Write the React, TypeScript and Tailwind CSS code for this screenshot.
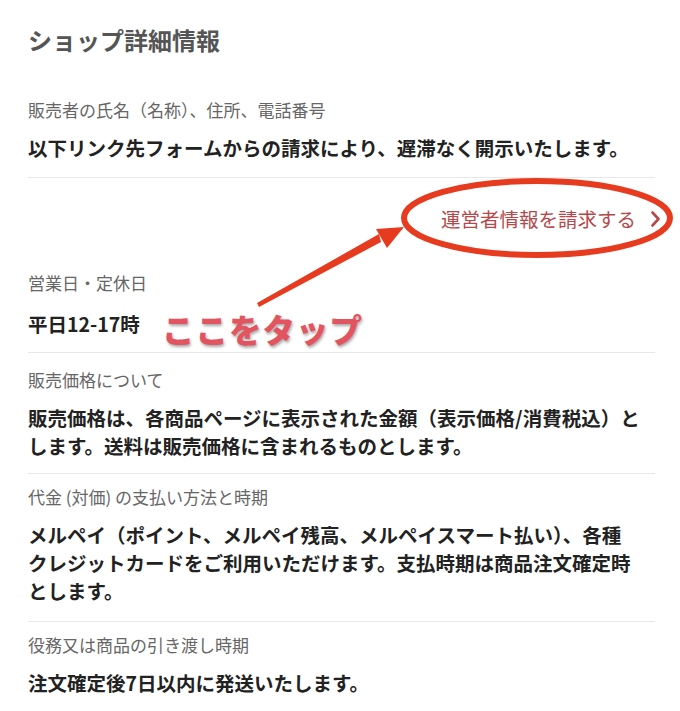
const font = "font-['Noto_Sans_CJK_JP','Noto_Sans',sans-serif]";

function Label({ children }: { children: React.ReactNode }) {
  return <p className="text-[17px] leading-[22px] text-[#666]">{children}</p>;
}

function Body({ children, className = "mt-[13px]" }: { children: React.ReactNode; className?: string }) {
  return (
    <p className={`${className} text-[19.5px] font-bold leading-[28px] text-[#222] whitespace-nowrap`}>
      {children}
    </p>
  );
}

export default function App() {
  return (
    <div className={`relative w-[680px] h-[711px] overflow-hidden bg-white ${font}`}>
      <div className="pl-[28px] pr-[25px]">
        <h1 className="pt-[24px] text-[24px] font-bold leading-[32px] text-[#555]">
          ショップ詳細情報
        </h1>

        <div className="mt-[43px] pb-[15px] border-b border-[#e8e8e8]">
          <Label>販売者の氏名（名称）、住所、電話番号</Label>
          <Body>以下リンク先フォームからの請求により、遅滞なく開示いたします。</Body>
        </div>

        <div className="mt-[27px] -mr-[6px] flex items-center justify-end text-[19.5px] leading-[28px] text-[#b5484a]">
          <span>運営者情報を請求する</span>
          <svg className="ml-[14px]" width="11" height="18" viewBox="0 0 11 18" fill="none">
            <path d="M2.5 2.5l6 6.5-6 6.5" stroke="#b5484a" strokeWidth="2.6" strokeLinecap="round" strokeLinejoin="round" />
          </svg>
        </div>

        <div className="mt-[39px] pb-[14px] border-b border-[#e8e8e8]">
          <Label>営業日・定休日</Label>
          <Body className="mt-[16px]">平日12-17時</Body>
        </div>

        <div className="pt-[16px] pb-[13px] border-b border-[#e8e8e8]">
          <Label>販売価格について</Label>
          <Body>
            販売価格は、各商品ページに表示された金額（表示価格/消費税込）と
            <br />
            します。送料は販売価格に含まれるものとします。
          </Body>
        </div>

        <div className="pt-[12px] pb-[16px] border-b border-[#e8e8e8]">
          <Label>代金 (対価) の支払い方法と時期</Label>
          <Body>
            メルペイ（ポイント、メルペイ残高、メルペイスマート払い）、各種
            <br />
            クレジットカードをご利用いただけます。支払時期は商品注文確定時
            <br />
            とします。
          </Body>
        </div>

        <div className="pt-[12px]">
          <Label>役務又は商品の引き渡し時期</Label>
          <Body>注文確定後7日以内に発送いたします。</Body>
        </div>
      </div>

      {/* annotation overlay */}
      <svg className="absolute left-0 top-0 pointer-events-none" width="680" height="711" viewBox="0 0 680 711">
        <ellipse cx="537" cy="218" rx="133" ry="37" fill="none" stroke="#e63b1f" strokeWidth="6" />
        <polygon points="257,303 259,307 381,242 379,234" fill="#e63b1f" />
        <polygon points="404,227 376,229 387,248" fill="#e63b1f" />
      </svg>
      <span className="absolute left-[162px] top-[309px] text-[32.5px] font-black leading-[40px] tracking-[1px] text-[#e25560] [paint-order:stroke_fill] [-webkit-text-stroke:4px_white] [text-shadow:1px_2px_3px_rgba(0,0,0,0.35)]">
        ここをタップ
      </span>
    </div>
  );
}
